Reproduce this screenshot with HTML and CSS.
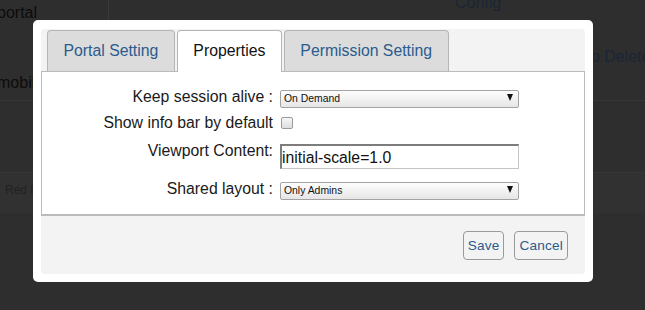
FILE: index.html
```html
<!DOCTYPE html>
<html>
<head>
<meta charset="utf-8">
<link rel="stylesheet" href="styles.css">
</head>
<body>
<div class="page">
  <div class="bg-row bg-row1">
    <div class="bg-cell bg-name">portal</div>
    <div class="bg-cell bg-mid"></div>
    <div class="bg-cell bg-link bg-config">Config</div>
  </div>
  <div class="bg-row bg-row2">
    <div class="bg-cell bg-name bg-mobil">mobil</div>
    <div class="bg-cell bg-mid2"></div>
    <div class="bg-cell bg-link bg-delete">Info Delete</div>
  </div>
  <div class="bg-row bg-row3"></div>
  <div class="bg-footer">Red Hat</div>
</div>

<div class="dialog">
  <div class="panel">
    <div class="tabs">
      <div class="tab">Portal Setting</div>
      <div class="tab tab-active">Properties</div>
      <div class="tab">Permission Setting</div>
    </div>
    <div class="content">
      <div class="form">
        <div class="form-row row-1">
          <label class="lbl">Keep session alive :</label>
          <div class="select-wrap"><select class="sel"><option>On Demand</option></select></div>
        </div>
        <div class="form-row row-2">
          <label class="lbl">Show info bar by default</label>
          <input type="checkbox" class="chk">
        </div>
        <div class="form-row row-3">
          <label class="lbl lbl-top">Viewport Content:</label>
          <input type="text" class="txt" value="initial-scale=1.0">
        </div>
        <div class="form-row row-4">
          <label class="lbl">Shared layout :</label>
          <div class="select-wrap"><select class="sel"><option>Only Admins</option></select></div>
        </div>
      </div>
    </div>
    <div class="footer">
      <button class="btn">Save</button>
      <button class="btn">Cancel</button>
    </div>
  </div>
</div>
</body>
</html>
```

FILE: styles.css
```css
html, body {
  margin: 0;
  padding: 0;
}
body {
  width: 645px;
  height: 310px;
  overflow: hidden;
  background: #2e2e2e;
  font-family: "Liberation Sans", Arial, sans-serif;
  position: relative;
}

/* background page (dimmed) */
.page {
  margin-top: -22px;
  color: #0c0c0c;
  font-size: 16px;
}
.bg-row {
  display: grid;
  grid-template-columns: 108px 347px 1fr;
}
.bg-row1 {
  height: 44px;
}
.bg-name {
  padding-top: 26px;
  margin-left: -3px;
}
.bg-mid {
  border-left: 1px solid #3a3a3a;
  height: 42px;
}
.bg-link {
  color: #1a2634;
}
.bg-config {
  padding-top: 16px;
}
.bg-row2 {
  height: 78px;
  border-bottom: 1px solid #363636;
  grid-template-columns: 108px 465px 1fr;
}
.bg-mobil {
  padding-top: 52px;
}
.bg-delete {
  padding-top: 26px;
  white-space: nowrap;
}
.bg-row3 {
  height: 71px;
  border-bottom: 1px solid #363636;
}
.bg-footer {
  height: 40px;
  background: #313131;
  color: #222;
  font-size: 12px;
  padding: 10px 0 0 5px;
  box-sizing: border-box;
}

/* dialog overlay */
.dialog {
  position: absolute;
  left: 33px;
  top: 20px;
  width: 560px;
  height: 262px;
  box-sizing: border-box;
  background: #fff;
  border-radius: 5px;
  padding: 9px 8px 8px 8px;
}
.panel {
  background: #f3f3f3;
  border-radius: 4px;
  height: 245px;
  display: flex;
  flex-direction: column;
}
.tabs {
  display: flex;
  gap: 2px;
  padding: 1px 0 0 6px;
  position: relative;
  z-index: 1;
  margin-bottom: -1px;
}
.tab {
  height: 41px;
  box-sizing: border-box;
  padding: 0 15.5px;
  line-height: 39px;
  font-size: 15.8px;
  color: #2b5b8d;
  background: #dcdcdc;
  border: 1px solid #b5b5b5;
  border-bottom: none;
  border-radius: 4px 4px 0 0;
  white-space: nowrap;
}
.tab-active {
  background: #fff;
  color: #111;
  height: 42px;
}
.content {
  background: #fff;
  border: 1px solid #bbb;
  border-bottom: 2px solid #bbb;
  height: 145px;
  box-sizing: border-box;
}
.form {
  padding-top: 15px;
  display: flex;
  flex-direction: column;
}
.form-row {
  display: grid;
  grid-template-columns: 231px auto;
  column-gap: 7px;
  align-items: center;
}
.row-2 {
  margin-top: 8px;
}
.row-3 {
  margin-top: 12px;
  align-items: start;
}
.row-4 {
  margin-top: 10px;
}
.lbl {
  text-align: right;
  font-size: 15.8px;
  line-height: 18px;
  color: #1a1a1a;
  white-space: nowrap;
}
.lbl-top {
  margin-top: -2px;
}
.select-wrap {
  position: relative;
  width: 239px;
  height: 18px;
  margin-top: 1px;
}
.select-wrap::after {
  content: "";
  position: absolute;
  right: 6px;
  top: 6px;
  border-left: 3.5px solid transparent;
  border-right: 3.5px solid transparent;
  border-top: 7px solid #111;
}
.sel {
  appearance: none;
  -webkit-appearance: none;
  width: 239px;
  height: 18px;
  box-sizing: border-box;
  border: 1px solid #a3a3a3;
  border-radius: 2px;
  background: linear-gradient(#fefefe, #e6e6e6);
  font-family: "Liberation Sans", Arial, sans-serif;
  font-size: 10.4px;
  color: #111;
  padding: 0 0 0 3px;
  margin: 0;
  outline: none;
}
.chk {
  appearance: none;
  -webkit-appearance: none;
  width: 12px;
  height: 12px;
  margin: 0 0 0 1px;
  box-sizing: border-box;
  border: 1px solid #9a9a9a;
  border-radius: 2px;
  background: linear-gradient(#f6f6f6, #dedede);
}
.txt {
  width: 239px;
  height: 25px;
  box-sizing: border-box;
  margin: 0;
  border: 1px solid #c4c4c4;
  border-top: 2px solid #7d7d7d;
  border-left: 2px solid #7d7d7d;
  font-family: "Liberation Sans", Arial, sans-serif;
  font-size: 15.8px;
  color: #111;
  padding: 1px 0 0 0;
  background: #fff;
  outline: none;
}
.footer {
  flex: 1;
  display: flex;
  justify-content: flex-end;
  align-items: flex-start;
  gap: 10px;
  padding: 15px 17px 0 0;
}
.btn {
  height: 29px;
  box-sizing: border-box;
  padding: 0 4px;
  border: 1px solid #9a9a9a;
  border-radius: 4px;
  background: #f3f3f3;
  font-family: "Liberation Sans", Arial, sans-serif;
  font-size: 13.6px;
  letter-spacing: 0.2px;
  color: #2b5b8d;
}
```
